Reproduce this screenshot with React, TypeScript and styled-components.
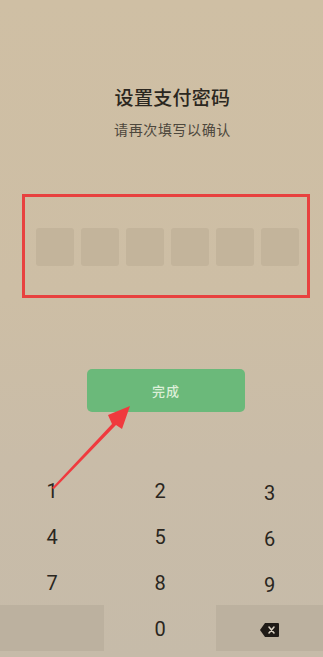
import React from "react";
import styled, { createGlobalStyle } from "styled-components";

const Global = createGlobalStyle`
  html, body { margin: 0; padding: 0; }
  body { background: #cdbda3; font-family: "Noto Sans CJK SC", "Noto Sans", sans-serif; }
`;

const Page = styled.div`
  position: relative;
  width: 323px;
  height: 657px;
  overflow: hidden;
  display: flex;
  flex-direction: column;
  background: linear-gradient(180deg, #cfbfa4 0%, #cdbea5 45%, #c9bca8 70%, #c6bba9 100%);
`;

const Header = styled.div`
  display: flex;
  flex-direction: column;
  align-items: center;
  padding-top: 84px;
  padding-left: 22px;
`;

const Title = styled.div`
  font-size: 19px;
  line-height: 26px;
  font-weight: 500;
  color: #2b2720;
  letter-spacing: 0.3px;
`;

const Subtitle = styled.div`
  margin-top: 9px;
  font-size: 14px;
  line-height: 20px;
  color: #4d473c;
  letter-spacing: 0.6px;
`;

const Frame = styled.div`
  margin: 55px 13px 0 22px;
  height: 104px;
  box-sizing: border-box;
  border: 3px solid #e8413f;
  display: flex;
  align-items: center;
  justify-content: center;
  gap: 7px;
  padding: 2px 6px 0 8px;
`;

const Cell = styled.div`
  width: 38px;
  height: 38px;
  border-radius: 3px;
  background: #c3b49b;
`;

const ButtonRow = styled.div`
  display: flex;
  padding-left: 87px;
  margin-top: 71px;
`;

const Done = styled.div`
  width: 158px;
  height: 43px;
  border-radius: 5px;
  background: #6bb97a;
  color: #dcefd8;
  font-size: 13px;
  font-weight: 500;
  display: flex;
  align-items: center;
  justify-content: center;
  letter-spacing: 1px;
`;

const Keypad = styled.div`
  margin-top: 55px;
  display: grid;
  grid-template-columns: 104px 112px 107px;
  grid-auto-rows: 46px;
`;

const Key = styled.div<{ $dark?: boolean; $shift?: number }>`
  display: flex;
  align-items: center;
  justify-content: center;
  font-family: Roboto, "Noto Sans", sans-serif;
  font-weight: 400;
  font-size: 20px;
  color: #2a2620;
  background: ${(p) => (p.$dark ? "#bcb19f" : "transparent")};
  padding-top: ${(p) => (p.$shift ?? 0)}px;
  box-sizing: border-box;
`;

const ArrowLayer = styled.svg`
  position: absolute;
  left: 0;
  top: 0;
  pointer-events: none;
`;

const Backspace = () => (
  <svg width="19" height="14" viewBox="0 0 19 14">
    <path d="M5 0 H18 a1 1 0 0 1 1 1 V13 a1 1 0 0 1 -1 1 H5 L0 7 Z" fill="#1f1b17" />
    <path d="M9 4 L14 10 M14 4 L9 10" stroke="#d8d0c2" strokeWidth="1.6" strokeLinecap="round" />
  </svg>
);

const keys: { label: React.ReactNode; dark?: boolean; shift?: number }[] = [
  { label: "1", shift: 2 },
  { label: "2", shift: 2 },
  { label: "3", shift: 6 },
  { label: "4", shift: 2 },
  { label: "5", shift: 2 },
  { label: "6", shift: 6 },
  { label: "7", shift: 2 },
  { label: "8", shift: 2 },
  { label: "9", shift: 6 },
  { label: "", dark: true, shift: 0 },
  { label: "0", shift: 2 },
  { label: <Backspace />, dark: true, shift: 4 },
];

export default function App() {
  return (
    <Page>
      <Global />
      <Header>
        <Title>设置支付密码</Title>
        <Subtitle>请再次填写以确认</Subtitle>
      </Header>
      <Frame>
        {Array.from({ length: 6 }).map((_, i) => (
          <Cell key={i} />
        ))}
      </Frame>
      <ButtonRow>
        <Done>完成</Done>
      </ButtonRow>
      <Keypad>
        {keys.map((k, i) => (
          <Key key={i} $dark={k.dark} $shift={k.shift}>
            {k.label}
          </Key>
        ))}
      </Keypad>
      <ArrowLayer width="323" height="657" viewBox="0 0 323 657">
        <path d="M52 488 L112 424 L108 415 L130 406 L122 429 L116 425 L54 489 Z" fill="#f03a3e" />
      </ArrowLayer>
    </Page>
  );
}
